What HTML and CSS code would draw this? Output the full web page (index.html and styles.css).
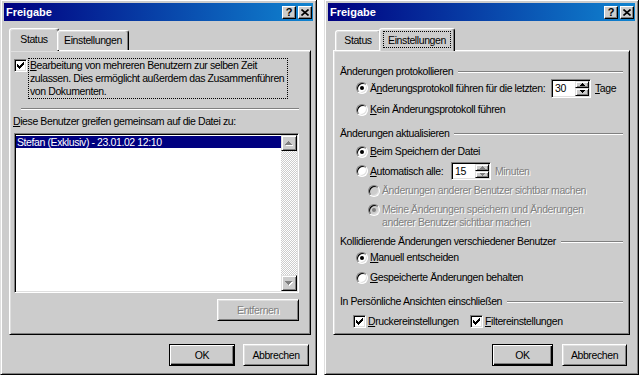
FILE: index.html
```html
<!DOCTYPE html>
<html lang="de">
<head>
    <meta charset="UTF-8">
    <meta name="viewport" content="width=device-width, initial-scale=1.0">
    <title>Freigabe</title>
    <link rel="stylesheet" href="styles.css">
</head>
<body>
<div class="desk">

    <!-- Status tab -->
    <div class="dialog dialog-left">
        <div class="titlebar">
            <span class="title">Freigabe</span>
            <span class="cbtn help">?</span>
            <span class="cbtn"><svg width="8" height="7" viewBox="0 0 8 7"><path d="M0.5 0.5L7.5 6.5M7.5 0.5L0.5 6.5" stroke="#000" stroke-width="1.6"/></svg></span>
        </div>
        <div class="dlg-body">
            <div class="tabs">
                <div class="tab tab-status active">Status</div>
                <div class="tab tab-settings">Einstellungen</div>
            </div>
            <div class="panel panel-status">
                <div class="share-row">
                    <span class="check"><svg width="7" height="7" viewBox="0 0 7 7"><path d="M6 0h1v3h-1v1h-1v1h-1v1h-1v1h-1v-1h-1v-1h-1v-3h1v1h1v1h1v-1h1v-1h1v-1h1v-1z"/></svg></span>
                    <span class="share-label"><u>B</u>earbeitung von mehreren Benutzern zur selben Zeit<br>zulassen. Dies ermöglicht außerdem das Zusammenführen<br>von Dokumenten.</span>
                </div>
                <div class="sep"></div>
                <div class="users-label"><u>D</u>iese Benutzer greifen gemeinsam auf die Datei zu:</div>
                <div class="listbox">
                    <div class="list-items">
                        <div class="list-item selected">Stefan (Exklusiv) - 23.01.02 12:10</div>
                    </div>
                    <div class="scrollbar">
                        <span class="sb-btn"><svg width="8" height="5" viewBox="0 0 8 5"><path fill="#fff" d="M4 1h1v1h1v1h1v1h1v1H1V4h1V3h1V2h1z"/><path fill="#808080" d="M3 0h1v1h1v1h1v1h1v1H0V3h1V2h1V1h1z"/></svg></span>
                        <span class="sb-track"></span>
                        <span class="sb-btn"><svg width="8" height="5" viewBox="0 0 8 5"><path fill="#fff" d="M1 1h7v1H7v1H6v1H5v1H4V4H3V3H2V2H1z"/><path fill="#808080" d="M0 0h7v1H6v1H5v1H4v1H3V3H2V2H1V1H0z"/></svg></span>
                    </div>
                </div>
                <button class="btn btn-remove" disabled>Entfernen</button>
            </div>
            <div class="footer">
                <button class="btn default">OK</button>
                <button class="btn">Abbrechen</button>
            </div>
        </div>
    </div>

    <!-- Einstellungen tab -->
    <div class="dialog dialog-right">
        <div class="titlebar">
            <span class="title">Freigabe</span>
            <span class="cbtn help">?</span>
            <span class="cbtn"><svg width="8" height="7" viewBox="0 0 8 7"><path d="M0.5 0.5L7.5 6.5M7.5 0.5L0.5 6.5" stroke="#000" stroke-width="1.6"/></svg></span>
        </div>
        <div class="dlg-body">
            <div class="tabs">
                <div class="tab tab-status">Status</div>
                <div class="tab tab-settings active"><span class="focus">Einstellungen</span></div>
            </div>
            <div class="panel panel-settings">
                <div class="group-head head-1"><span>Änderungen protokollieren</span><span class="line"></span></div>
                <div class="opt opt-spin">
                    <span class="radio on"></span>
                    <span class="opt-label label-days">Ä<u>n</u>derungsprotokoll führen für die letzten:</span>
                    <span class="spin">
                        <span class="spin-val">30</span>
                        <span class="spin-btns">
                            <span class="spin-btn"><svg width="5" height="3" viewBox="0 0 5 3"><path d="M2 0h1v1h1v1h1v1H0V2h1V1h1z"/></svg></span>
                            <span class="spin-btn"><svg width="5" height="3" viewBox="0 0 5 3"><path d="M0 0h5v1H4v1H3v1H2V2H1V1H0z"/></svg></span>
                        </span>
                    </span>
                    <span class="unit"><u>T</u>age</span>
                </div>
                <div class="opt opt-2">
                    <span class="radio"></span>
                    <span class="opt-label"><u>K</u>ein Änderungsprotokoll führen</span>
                </div>

                <div class="group-head head-2"><span>Änderungen aktualisieren</span><span class="line"></span></div>
                <div class="opt opt-save">
                    <span class="radio on"></span>
                    <span class="opt-label"><u>B</u>eim Speichern der Datei</span>
                </div>
                <div class="opt opt-spin">
                    <span class="radio"></span>
                    <span class="opt-label label-auto"><u>A</u>utomatisch alle:</span>
                    <span class="spin spin-small">
                        <span class="spin-val">15</span>
                        <span class="spin-btns dim">
                            <span class="spin-btn"><svg width="5" height="3" viewBox="0 0 5 3"><path d="M2 0h1v1h1v1h1v1H0V2h1V1h1z"/></svg></span>
                            <span class="spin-btn"><svg width="5" height="3" viewBox="0 0 5 3"><path d="M0 0h5v1H4v1H3v1H2V2H1V1H0z"/></svg></span>
                        </span>
                    </span>
                    <span class="unit off">Minuten</span>
                </div>
                <div class="opt opt-sub">
                    <span class="radio off"></span>
                    <span class="opt-label off">Änderungen anderer Benutzer sichtbar machen</span>
                </div>
                <div class="opt opt-sub opt-two">
                    <span class="radio off on"></span>
                    <span class="opt-label off">Meine Änderungen speichern und Änderungen<br>anderer Benutzer sichtbar machen</span>
                </div>

                <div class="group-head head-3"><span>Kollidierende Änderungen verschiedener Benutzer</span><span class="line"></span></div>
                <div class="opt">
                    <span class="radio on"></span>
                    <span class="opt-label"><u>M</u>anuell entscheiden</span>
                </div>
                <div class="opt opt-keep">
                    <span class="radio"></span>
                    <span class="opt-label"><u>G</u>espeicherte Änderungen behalten</span>
                </div>

                <div class="group-head head-4"><span>In Persönliche Ansichten einschließen</span><span class="line"></span></div>
                <div class="opt opt-checks">
                    <span class="cb-item cb-print">
                        <span class="check"><svg width="7" height="7" viewBox="0 0 7 7"><path d="M6 0h1v3h-1v1h-1v1h-1v1h-1v1h-1v-1h-1v-1h-1v-3h1v1h1v1h1v-1h1v-1h1v-1h1v-1z"/></svg></span>
                        <span class="opt-label"><u>D</u>ruckereinstellungen</span>
                    </span>
                    <span class="cb-item">
                        <span class="check"><svg width="7" height="7" viewBox="0 0 7 7"><path d="M6 0h1v3h-1v1h-1v1h-1v1h-1v1h-1v-1h-1v-1h-1v-3h1v1h1v1h1v-1h1v-1h1v-1h1v-1z"/></svg></span>
                        <span class="opt-label"><u>F</u>iltereinstellungen</span>
                    </span>
                </div>
            </div>
            <div class="footer">
                <button class="btn default">OK</button>
                <button class="btn">Abbrechen</button>
            </div>
        </div>
    </div>

</div>
</body>
</html>
```

FILE: styles.css
```css
* {
    box-sizing: border-box;
}
html, body {
    margin: 0;
    padding: 0;
}
body {
    width: 639px;
    height: 375px;
    overflow: hidden;
    background: #fff;
    font-family: "Liberation Sans", Arial, sans-serif;
    font-size: 10.5px;
    letter-spacing: -0.4px;
    color: #000;
}
.desk {
    display: flex;
    gap: 7px;
    margin-top: -1px;
}

/* window frame */
.dialog {
    height: 376px;
    background: #cccccc;
    border: 1px solid;
    border-color: #dfdfdf #000 #000 #dfdfdf;
    box-shadow: inset 1px 1px #fff, inset -1px -1px #808080;
    padding: 3px;
    display: flex;
    flex-direction: column;
}
.dialog-left {
    width: 317px;
}
.dialog-right {
    width: 315px;
}
.titlebar {
    height: 18px;
    flex: none;
    background: linear-gradient(to right, #000080, #1084d0);
    display: flex;
    align-items: center;
    gap: 2px;
    padding: 0 1px 0 2px;
}
.title {
    flex: 1;
    color: #fff;
    font-weight: bold;
    font-size: 11px;
    letter-spacing: 0;
}
.cbtn {
    width: 14px;
    height: 13px;
    background: #cccccc;
    border: 1px solid;
    border-color: #fff #000 #000 #fff;
    box-shadow: inset -1px -1px #808080;
    display: flex;
    align-items: center;
    justify-content: center;
}
.cbtn.help {
    font-weight: bold;
    font-size: 11px;
    letter-spacing: 0;
    line-height: 11px;
}

.dlg-body {
    flex: 1;
    display: flex;
    flex-direction: column;
    padding: 7px 0 0 5px;
}

/* tabs */
.tabs {
    display: flex;
    height: 22px;
    padding-left: 2px;
    position: relative;
    z-index: 1;
}
.tab {
    margin-top: 2px;
    height: 20px;
    background: #cccccc;
    border: 1px solid;
    border-bottom: none;
    border-color: #fff #000 transparent #fff;
    border-radius: 3px 3px 0 0;
    box-shadow: inset -1px 0 #808080, inset 1px 1px #dfdfdf;
    display: flex;
    align-items: center;
    justify-content: center;
    padding-bottom: 1px;
}
.tab-status {
    width: 46px;
}
.tab-settings {
    width: 72px;
}
.tab.active {
    margin: 0 -2px;
    height: 23px;
    padding-bottom: 3px;
}
.tab-status.active {
    width: 50px;
}
.tab-settings.active {
    width: 76px;
}
.focus {
    flex: 1;
    align-self: stretch;
    margin: 2px 3px 0;
    border: 1px dotted #000;
    display: flex;
    align-items: center;
    justify-content: center;
}

/* property page */
.panel {
    height: 285px;
    flex: none;
    background: #cccccc;
    border: 1px solid;
    border-color: #fff #000 #000 #fff;
    box-shadow: inset 1px 1px #dfdfdf, inset -1px -1px #808080;
    display: flex;
    flex-direction: column;
    align-items: flex-start;
}
.panel-status {
    width: 302px;
}
.panel-settings {
    width: 297px;
}

/* status page */
.share-row {
    display: flex;
    align-items: flex-start;
    margin: 7px 0 0 4px;
}
.share-row .check {
    margin-top: 1px;
}
.share-label {
    margin-left: 1px;
    width: 260px;
    border: 1px dotted #000;
    padding: 0 1px;
    line-height: 13px;
    white-space: nowrap;
}
.sep {
    width: 278px;
    height: 2px;
    margin: 9px 0 0 11px;
    border-top: 1px solid #808080;
    border-bottom: 1px solid #fff;
}
.users-label {
    margin: 5px 0 0 3px;
    line-height: 13px;
}
.listbox {
    width: 285px;
    height: 160px;
    margin: 5px 0 0 4px;
    background: #fff;
    border: 1px solid;
    border-color: #808080 #fff #fff #808080;
    box-shadow: inset 1px 1px #000, inset -1px -1px #dfdfdf;
    padding: 1px;
    display: flex;
}
.list-items {
    flex: 1;
}
.list-item {
    height: 12px;
    margin-top: 1px;
    padding-left: 1px;
    line-height: 12px;
    white-space: nowrap;
}
.list-item.selected {
    background: #000080;
    color: #fff;
}
.scrollbar {
    width: 16px;
    display: flex;
    flex-direction: column;
}
.sb-btn {
    height: 16px;
    background: #cccccc;
    border: 1px solid;
    border-color: #dfdfdf #000 #000 #dfdfdf;
    box-shadow: inset 1px 1px #fff, inset -1px -1px #808080;
    display: flex;
    align-items: center;
    justify-content: center;
}
.sb-track {
    flex: 1;
    background: repeating-conic-gradient(#cccccc 0 25%, #fff 0 50%) 0 0 / 2px 2px;
}
.btn-remove {
    align-self: flex-end;
    margin: 6px 11px 0 0;
    width: 82px;
}

/* buttons */
.btn {
    height: 22px;
    padding: 0;
    font-family: inherit;
    font-size: inherit;
    letter-spacing: inherit;
    color: #000;
    background: #cccccc;
    border: 1px solid;
    border-color: #fff #000 #000 #fff;
    box-shadow: inset 1px 1px #dfdfdf, inset -1px -1px #808080;
}
.btn.default {
    border-color: #000;
    box-shadow: inset 1px 1px #fff, inset -1px -1px #000, inset -2px -2px #808080;
}
.btn:disabled {
    color: #808080;
    text-shadow: 1px 1px #fff;
}
.footer {
    display: flex;
    justify-content: flex-end;
    margin-top: 9px;
}
.dialog-left .footer {
    gap: 8px;
    padding-right: 4px;
}
.dialog-left .footer .btn {
    width: 66px;
}
.dialog-right .footer {
    gap: 9px;
    padding-right: 8px;
}
.dialog-right .footer .btn {
    width: 61px;
}
.dialog-right .footer .btn + .btn {
    width: 65px;
}

/* settings page */
.group-head {
    align-self: stretch;
    display: flex;
    align-items: center;
    line-height: 13px;
    margin: 0 6px 0 6px;
    white-space: nowrap;
}
.group-head .line {
    flex: 1;
    height: 2px;
    margin-left: 5px;
    border-top: 1px solid #808080;
    border-bottom: 1px solid #fff;
}
.head-1 {
    margin-top: 14px;
}
.head-2 {
    margin-top: 8px;
}
.head-3 {
    margin-top: 6px;
}
.head-4 {
    margin-top: 8px;
}
.opt {
    display: flex;
    align-items: center;
    height: 19px;
    padding-left: 22px;
    white-space: nowrap;
}
.opt-label {
    margin-left: 2px;
    line-height: 13px;
}
.opt-spin {
    height: 20px;
}
.opt-2 {
    margin-top: 2px;
}
.opt-save {
    margin-top: 2px;
}
.opt-keep {
    margin-top: 1px;
}
.opt-sub {
    padding-left: 34px;
}
.opt-two {
    height: 26px;
    margin-top: 3px;
    align-items: flex-start;
}
.opt-two .radio {
    margin-top: 1px;
}
.opt-checks {
    margin-top: 4px;
    padding-left: 19px;
}
.label-days {
    width: 179px;
}
.label-auto {
    width: 79px;
}
.unit {
    margin-left: 4px;
}
.off {
    color: #808080;
    text-shadow: 1px 1px #fff;
}
.cb-item {
    display: flex;
    align-items: center;
}
.cb-print {
    width: 117px;
}

/* controls */
.radio {
    flex: none;
    position: relative;
    width: 12px;
    height: 12px;
    border-radius: 50%;
    border: 1px solid;
    border-color: #808080 #fff #fff #808080;
    box-shadow: inset 1px 1px #000, inset -1px -1px #dfdfdf;
    background: #fff;
}
.radio.on::after {
    content: "";
    position: absolute;
    left: 3px;
    top: 3px;
    width: 4px;
    height: 4px;
    border-radius: 50%;
    background: #000;
}
.radio.off {
    background: #cccccc;
}
.radio.off.on::after {
    background: #808080;
}
.check {
    flex: none;
    width: 13px;
    height: 13px;
    background: #fff;
    border: 1px solid;
    border-color: #808080 #fff #fff #808080;
    box-shadow: inset 1px 1px #000, inset -1px -1px #dfdfdf;
    display: flex;
    align-items: center;
    justify-content: center;
}
.spin {
    flex: none;
    width: 40px;
    height: 19px;
    margin-left: 2px;
    background: #fff;
    border: 1px solid;
    border-color: #808080 #fff #fff #808080;
    box-shadow: inset 1px 1px #000, inset -1px -1px #dfdfdf;
    padding: 1px;
    display: flex;
}
.spin-small {
    height: 18px;
}
.spin-val {
    flex: 1;
    padding-left: 2px;
    line-height: 15px;
}
.spin-btns {
    width: 14px;
    display: flex;
    flex-direction: column;
}
.spin-btn {
    flex: 1;
    background: #cccccc;
    border: 1px solid;
    border-color: #dfdfdf #000 #000 #dfdfdf;
    box-shadow: inset 1px 1px #fff, inset -1px -1px #808080;
    display: flex;
    align-items: center;
    justify-content: center;
}
.spin-btns.dim svg {
    fill: #808080;
}
```
